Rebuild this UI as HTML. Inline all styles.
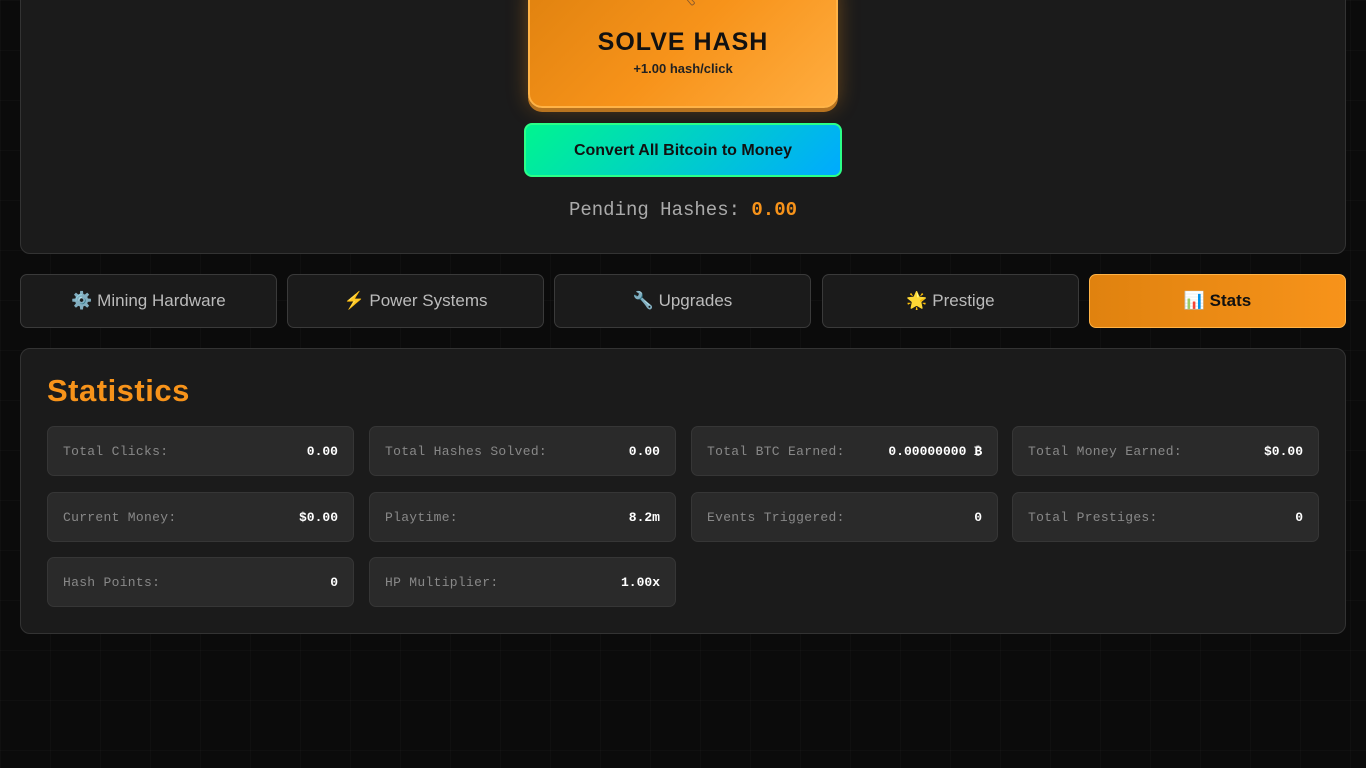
<!DOCTYPE html>
<html><head><meta charset="utf-8"><style>
body{margin:0;width:1366px;height:768px;overflow:hidden;background:#0b0b0b;
background-image:linear-gradient(rgba(255,255,255,0.018) 1px,transparent 1px),linear-gradient(90deg,rgba(255,255,255,0.018) 1px,transparent 1px);background-size:50px 50px;
font-family:"Liberation Sans",sans-serif;position:relative}
.panel{position:absolute;left:20px;width:1324px;background:#1b1b1b;border:1px solid #333;border-radius:10px}
.solve{position:absolute;left:528px;top:-20px;width:306px;height:124px;border:2px solid #ffb347;border-radius:14px;background:linear-gradient(135deg,#e0820f,#f7931a 50%,#ffad40);box-shadow:0 4px 0 #b8731f,0 0 20px rgba(247,147,26,.35);text-align:center}
.solve h1{margin:0;position:absolute;top:46px;width:100%;font-size:25px;font-weight:bold;letter-spacing:1px;color:#111}
.solve p{margin:0;position:absolute;top:79px;width:100%;font-size:13px;font-weight:bold;color:#222}
.conv{position:absolute;left:524px;top:123px;width:314px;height:50px;border:2px solid #2bff88;border-radius:8px;background:linear-gradient(135deg,#00f58f,#00aaff);color:#111;font-weight:bold;font-size:16px;text-align:center;line-height:52px}
.pend{position:absolute;top:199px;width:1366px;text-align:center;font-family:"Liberation Mono",monospace;font-size:19px;color:#aaa}
.pend b{color:#f7931a}
.tab{position:absolute;top:274px;width:255px;height:52px;border:1px solid #3a3a3a;border-radius:7px;background:#1b1b1b;color:#bbb;font-size:17px;text-align:center;line-height:52px}
.tab.on{background:linear-gradient(90deg,#e0820f,#f7931a);border-color:#ffb347;color:#111;font-weight:bold}
.title{position:absolute;left:47px;top:373px;font-size:31px;font-weight:bold;color:#f7931a;letter-spacing:.5px}
.card{position:absolute;width:307px;height:50px;background:#2a2a2a;border:1px solid #363636;border-radius:7px;font-family:"Liberation Mono",monospace;font-size:13px;box-sizing:border-box;padding:0 15px;display:flex;justify-content:space-between;align-items:center}
.card span{color:#888;letter-spacing:.3px}.card b{color:#fff}
</style></head><body>
<div class="panel" style="top:-20px;height:272px"></div>
<div class="solve"><div style="position:absolute;left:140px;top:0;font-size:22px;color:#8b5a2b">⛏</div><h1>SOLVE HASH</h1><p>+1.00 hash/click</p></div>
<div class="conv">Convert All Bitcoin to Money</div>
<div class="pend">Pending Hashes: <b>0.00</b></div>
<div class="tab" style="left:20px">⚙️ Mining Hardware</div>
<div class="tab" style="left:287px">⚡ Power Systems</div>
<div class="tab" style="left:554px">🔧 Upgrades</div>
<div class="tab" style="left:822px">🌟 Prestige</div>
<div class="tab on" style="left:1089px">📊 Stats</div>
<div class="panel" style="top:348px;height:284px"></div>
<div class="title">Statistics</div>
<div class="card" style="left:47px;top:426px"><span>Total Clicks:</span><b>0.00</b></div>
<div class="card" style="left:369px;top:426px"><span>Total Hashes Solved:</span><b>0.00</b></div>
<div class="card" style="left:691px;top:426px"><span>Total BTC Earned:</span><b>0.00000000 ₿</b></div>
<div class="card" style="left:1012px;top:426px"><span>Total Money Earned:</span><b>$0.00</b></div>
<div class="card" style="left:47px;top:492px"><span>Current Money:</span><b>$0.00</b></div>
<div class="card" style="left:369px;top:492px"><span>Playtime:</span><b>8.2m</b></div>
<div class="card" style="left:691px;top:492px"><span>Events Triggered:</span><b>0</b></div>
<div class="card" style="left:1012px;top:492px"><span>Total Prestiges:</span><b>0</b></div>
<div class="card" style="left:47px;top:557px"><span>Hash Points:</span><b>0</b></div>
<div class="card" style="left:369px;top:557px"><span>HP Multiplier:</span><b>1.00x</b></div>
</body></html>
